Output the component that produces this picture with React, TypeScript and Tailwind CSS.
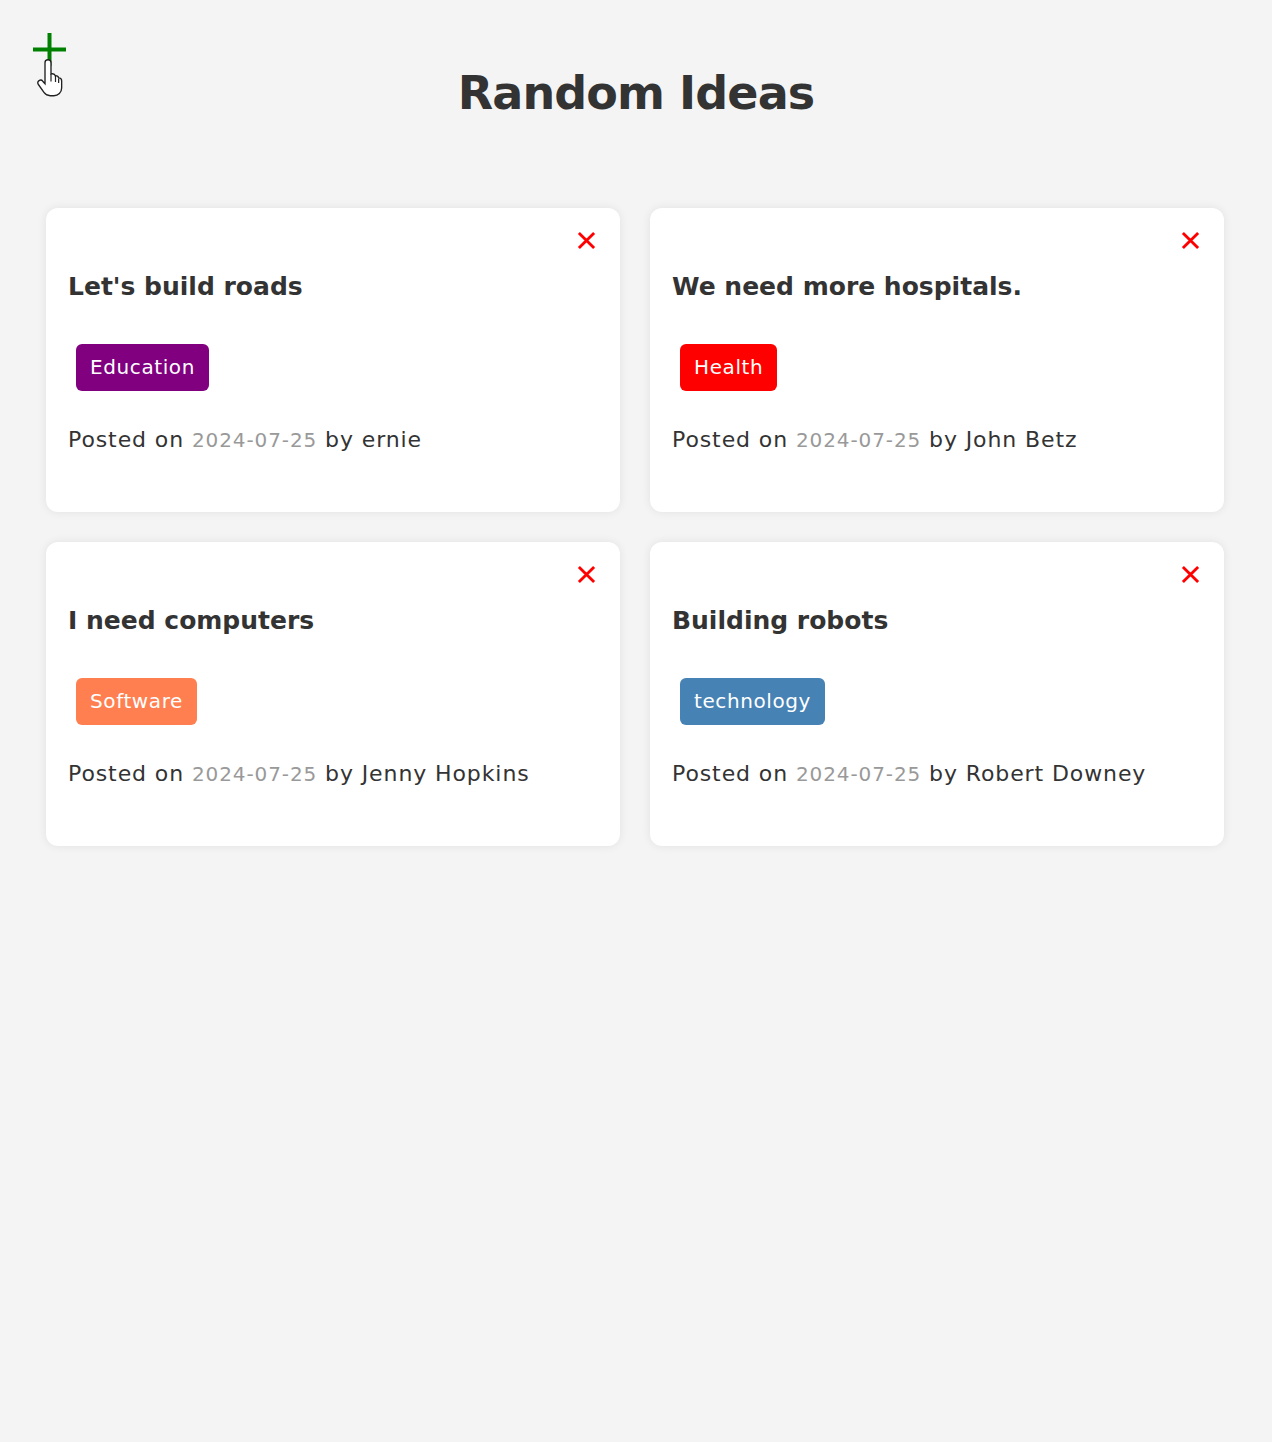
import React from 'react';

type Idea = {
  text: string;
  tag: string;
  tagClass: string;
  date: string;
  username: string;
};

const ideas: Idea[] = [
  { text: "Let's build roads", tag: 'Education', tagClass: 'bg-[#800080]', date: '2024-07-25', username: 'ernie' },
  { text: 'We need more hospitals.', tag: 'Health', tagClass: 'bg-[#ff0000]', date: '2024-07-25', username: 'John Betz' },
  { text: 'I need computers', tag: 'Software', tagClass: 'bg-[#ff7f50]', date: '2024-07-25', username: 'Jenny Hopkins' },
  { text: 'Building robots', tag: 'technology', tagClass: 'bg-[#4682b4]', date: '2024-07-25', username: 'Robert Downey' },
];

function IdeaCard({ idea }: { idea: Idea }) {
  return (
    <div className="bg-white rounded-xl shadow-[0_0_10px_rgba(0,0,0,0.08)] pl-[22px] pr-[24px] pt-[23px] pb-[55px] flex flex-col">
      <div className="flex justify-end">
        <button className="w-[19px] h-[19px] text-[#ff0000]">
          <svg viewBox="0 0 20 20" className="w-[19px] h-[19px]" fill="none" stroke="currentColor" strokeWidth={3}>
            <path d="M2 2L18 18M18 2L2 18" />
          </svg>
        </button>
      </div>
      <h3 className="mt-[18px] text-[25px] leading-[38px] font-bold text-[#333] tracking-[0px]">{idea.text}</h3>
      <div className="mt-[38px] ml-[8px]">
        <span className={`${idea.tagClass} inline-block text-white text-[20px] leading-[47px] h-[47px] px-[14px] rounded-md tracking-[0.6px]`}>
          {idea.tag}
        </span>
      </div>
      <p className="mt-[32px] text-[22px] leading-[33px] text-[#333] tracking-[0.9px]">
        Posted on <span className="text-[#999] text-[20px]">{idea.date}</span> by {idea.username}
      </p>
    </div>
  );
}

export default function App() {
  return (
    <div className="min-h-[1442px] bg-[#f4f4f4] text-[#333] relative" style={{ fontFamily: '"DejaVu Sans", "Noto Sans", sans-serif' }}>
      <header className="relative pt-[60px] flex justify-center">
        <button className="absolute left-[33px] top-[33px] w-[33px] h-[33px] text-[#008000]">
          <svg viewBox="0 0 33 33" className="w-[33px] h-[33px]" fill="none" stroke="currentColor" strokeWidth={4}>
            <path d="M16.5 0V33M0 16.5H33" />
          </svg>
          <svg viewBox="0 0 24 28" className="absolute left-[3px] top-[23px] w-[36px] h-[42px]">
            <path
              d="M8 2.5c1.1 0 2 .9 2 2V12l1-.2c.9 0 1.7.6 1.9 1.4l.2-.1c1 0 1.8.6 2 1.5 1.1 0 2 .8 2 1.9v4.8c0 2.9-2.3 5.2-5.2 5.2H9.5c-1.7 0-3.2-.8-4.2-2.2L1.6 19c-.6-.9-.4-2 .4-2.6.8-.5 1.9-.4 2.5.4L6 18.5V4.5c0-1.1.9-2 2-2z"
              fill="#fff"
              stroke="#222"
              strokeWidth={0.9}
            />
            <path d="M10 12v5M13 13.3v4M15.1 15v3" stroke="#222" strokeWidth={0.8} />
          </svg>
        </button>
        <h1 className="text-[46px] leading-[66px] font-bold text-[#333] tracking-[-0.9px]">Random Ideas</h1>
      </header>
      <main className="w-[1178px] ml-[46px] mt-[82px] grid grid-cols-2 gap-[30px]">
        {ideas.map((idea) => (
          <IdeaCard key={idea.text} idea={idea} />
        ))}
      </main>
    </div>
  );
}
